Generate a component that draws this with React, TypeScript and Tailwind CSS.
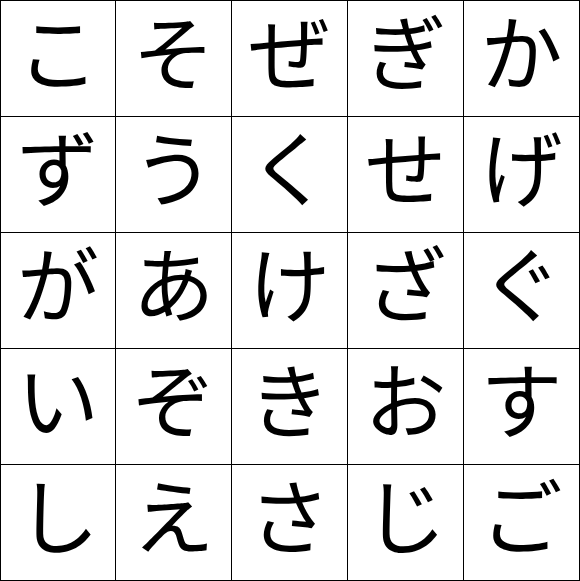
import React from "react";

const chars = [
  "こ", "そ", "ぜ", "ぎ", "か",
  "ず", "う", "く", "せ", "げ",
  "が", "あ", "け", "ざ", "ぐ",
  "い", "ぞ", "き", "お", "す",
  "し", "え", "さ", "じ", "ご",
];

export default function App() {
  return (
    <div className="w-[580px] h-[581px] bg-white overflow-hidden">
      <div
        className="grid grid-cols-[114px_115px_115px_115px_115px] grid-rows-[115px_115px_115px_115px_115px] gap-px bg-black border border-black w-[581px]"
        style={{ fontFamily: '"Noto Sans CJK JP", sans-serif' }}
      >
        {chars.map((c, i) => (
          <div key={i} className="bg-white flex items-center justify-center pb-5 text-[82px] leading-[95px] text-black">
            {c}
          </div>
        ))}
      </div>
    </div>
  );
}
